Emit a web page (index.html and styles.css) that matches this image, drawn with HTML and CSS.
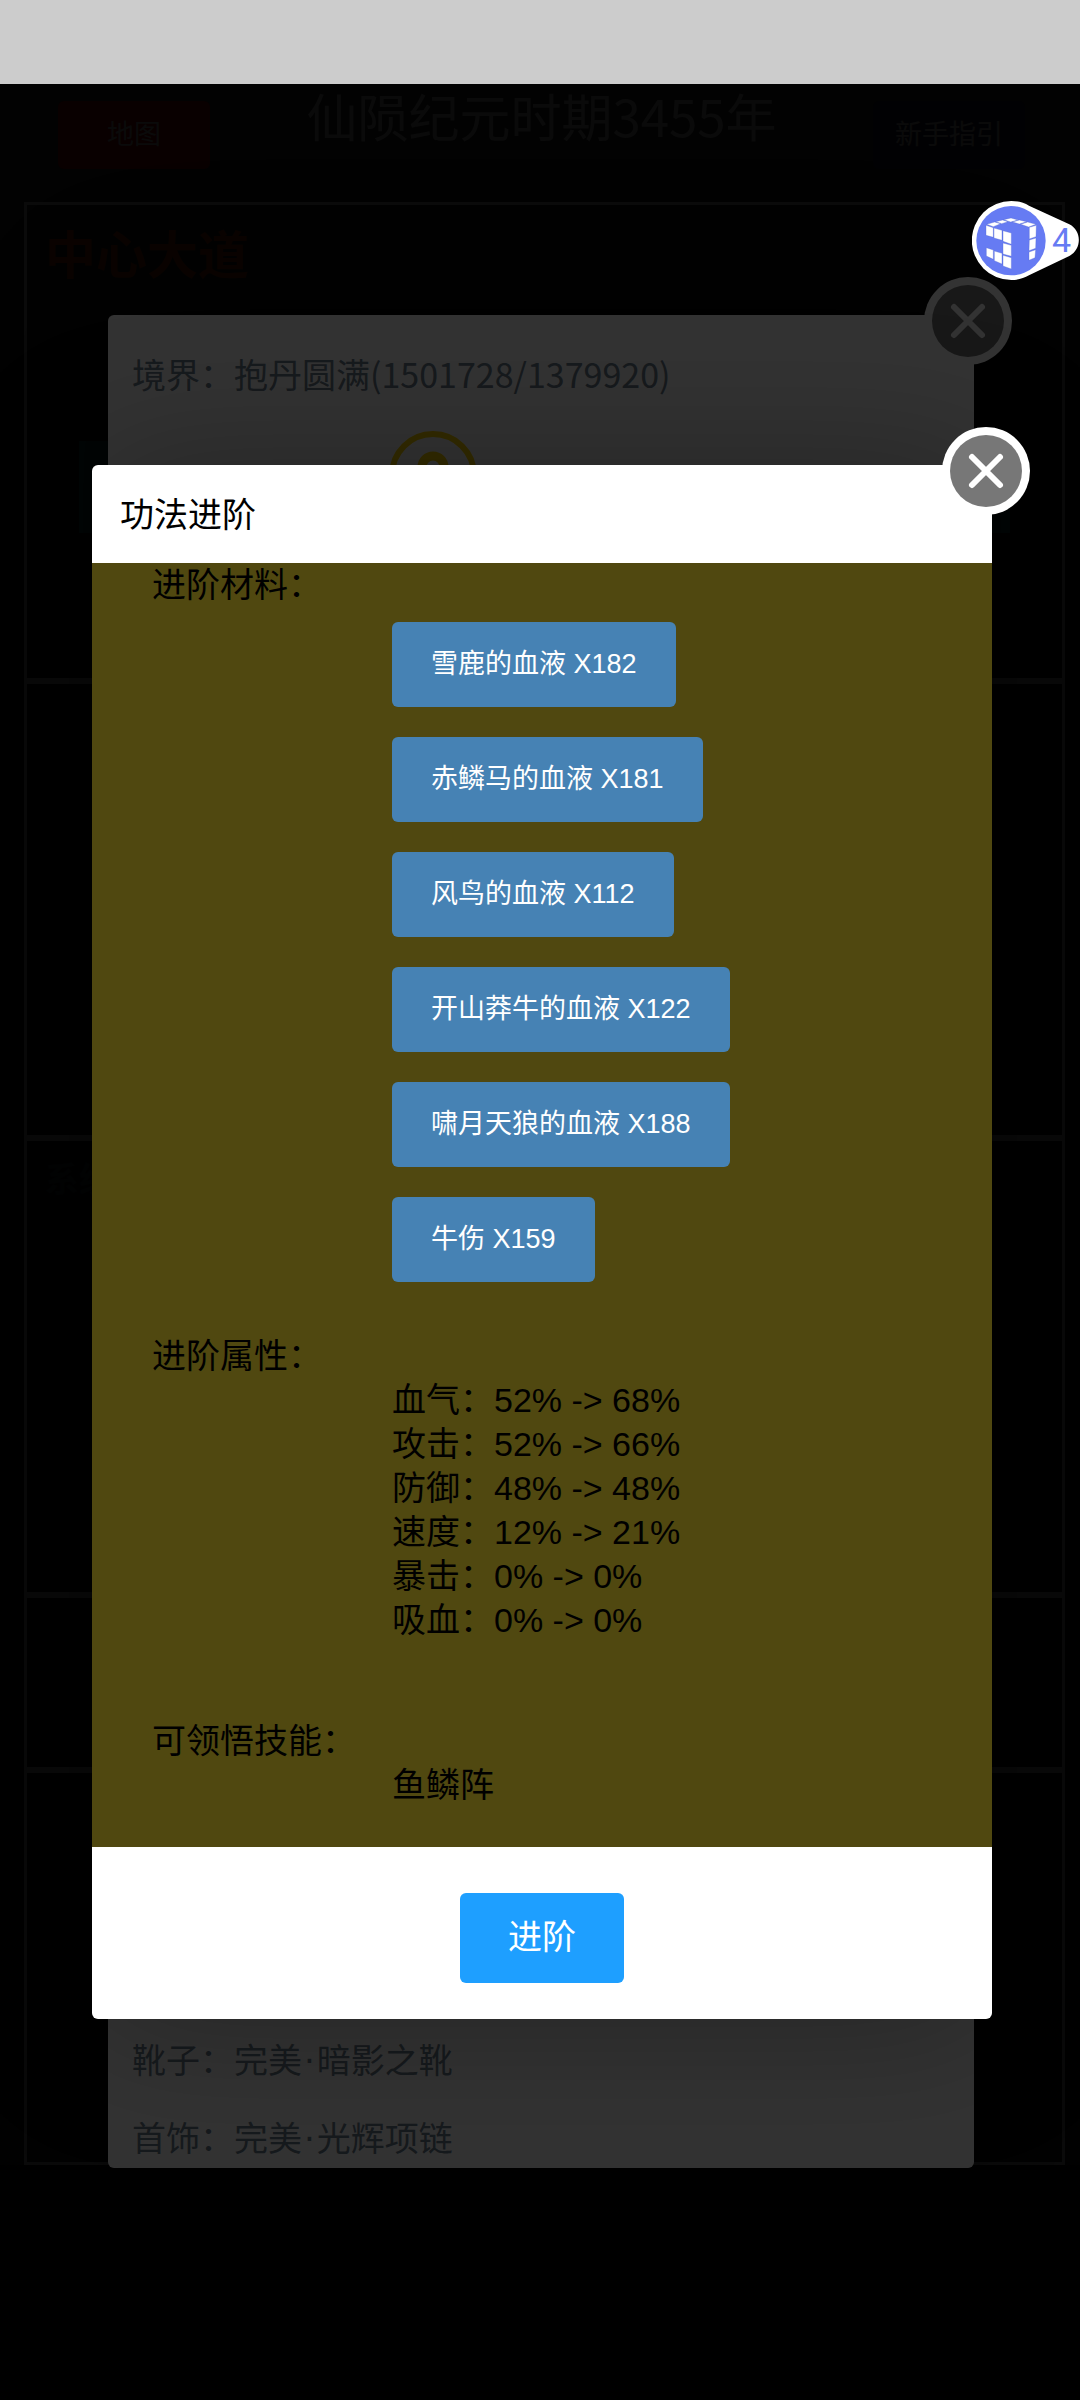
FILE: index.html
```
<!DOCTYPE html>
<html lang="zh-CN">

<head>
    <meta charset="utf-8">
    <meta name="viewport" content="width=device-width, initial-scale=1">
    <title>仙陨纪元</title>
    <link rel="stylesheet" href="styles.css">
</head>

<body>
    <div class="status-bar"></div>

    <div class="screen">
        <div class="page">
            <div class="top-bar">
                <button class="nav-button map">地图</button>
                <h1>仙陨纪元时期3455年</h1>
                <button class="nav-button guide">新手指引</button>
            </div>

            <div class="board">
                <div class="place">
                    <h2>中心大道</h2>
                    <div class="place-block"></div>
                </div>
                <div class="panel"></div>
                <div class="panel">
                    <h3>系统</h3>
                </div>
                <div class="panel short"></div>
                <div class="panel last"></div>
            </div>
        </div>

        <div class="shade"></div>

        <!-- role info -->
        <div class="popup role">
            <button class="close" aria-label="关闭">
                <svg viewBox="0 0 90 90">
                    <circle cx="45" cy="45" r="44" fill="#fff" />
                    <circle cx="45" cy="45" r="36" fill="#777" />
                    <path d="M31 31L59 59M59 31L31 59" stroke="#fff" stroke-width="6" stroke-linecap="round" />
                </svg>
            </button>
            <div class="role-top">
                <p>境界：抱丹圆满(1501728/1379920)</p>
                <svg class="coin" viewBox="0 0 88 88" fill="none" stroke="gold">
                    <circle cx="44" cy="44" r="41" stroke-width="6" />
                    <circle cx="44" cy="36" r="11" stroke-width="9" />
                </svg>
            </div>
            <div class="role-bottom">
                <p>靴子：完美<span class="dot">·</span>暗影之靴</p>
                <p>首饰：完美<span class="dot">·</span>光辉项链</p>
            </div>
        </div>

        <div class="shade"></div>

        <!-- upgrade -->
        <div class="popup upgrade">
            <button class="close" aria-label="关闭">
                <svg viewBox="0 0 90 90">
                    <circle cx="45" cy="45" r="44" fill="#fff" />
                    <circle cx="45" cy="45" r="36" fill="#777" />
                    <path d="M31 31L59 59M59 31L31 59" stroke="#fff" stroke-width="6" stroke-linecap="round" />
                </svg>
            </button>
            <div class="upgrade-title">功法进阶</div>
            <div class="upgrade-body">
                <p>进阶材料：</p>
                <div class="materials">
                    <button>雪鹿的血液 X182</button>
                    <button>赤鳞马的血液 X181</button>
                    <button>风鸟的血液 X112</button>
                    <button>开山莽牛的血液 X122</button>
                    <button>啸月天狼的血液 X188</button>
                    <button>牛伤 X159</button>
                </div>
                <p>进阶属性：</p>
                <ul class="attributes">
                    <li>血气：52% -&gt; 68%</li>
                    <li>攻击：52% -&gt; 66%</li>
                    <li>防御：48% -&gt; 48%</li>
                    <li>速度：12% -&gt; 21%</li>
                    <li>暴击：0% -&gt; 0%</li>
                    <li>吸血：0% -&gt; 0%</li>
                </ul>
                <p>可领悟技能：</p>
                <ul class="skills">
                    <li>鱼鳞阵</li>
                </ul>
            </div>
            <div class="upgrade-footer">
                <button>进阶</button>
            </div>
        </div>
    </div>

    <!-- floating helper -->
    <div class="float-ball">
        <svg viewBox="36 33 321 237">
            <path d="M154 33C174 33 192 38 207 47L328 103C366 122 366 178 328 198L207 256C192 265 174 270 154 270A118 118 0 0 1 154 33Z" fill="#fff" />
            <circle cx="153" cy="152" r="104" fill="#667bf3" />
            <g fill="#fff" stroke="#5267cf" stroke-width="1">
                <path d="M78 106L100 113V142L78 136ZM102 114L126 121V151L102 144ZM129 122L154 129V163L129 154Z" />
                <path d="M129 159L154 166V199L129 192ZM129 196L154 203V237L129 228Z" />
                <path d="M79 173L100 180V208L79 198ZM103 183L126 190V222L103 212Z" />
                <path d="M208 112L229 106L228 140L208 147ZM208 150L228 144L227 175L207 182ZM207 186L227 179L225 203L207 211Z" />
                <path d="M80 103L104 96L122 101L100 110ZM107 95L128 90L144 95L125 101ZM131 89L153 84L175 90L152 96Z" />
                <path d="M178 90L200 95L178 102L157 96ZM203 96L228 103L206 111L182 103Z" />
            </g>
        </svg>
        <span>4</span>
    </div>
</body>

</html>
```

FILE: styles.css
```
* {
    box-sizing: border-box;
}

body {
    margin: 0;
    min-height: 100vh;
    display: flex;
    flex-direction: column;
    position: relative;
    font-family: "Noto Sans CJK SC", sans-serif;
    font-size: 34px;
    line-height: 44px;
    color: #000;
    background-color: #000;
}

h1, h2, h3, p, ul {
    margin: 0;
    padding: 0;
    font-weight: normal;
    list-style: none;
}

button {
    font-family: inherit;
    border: none;
    border-radius: 6px;
    color: #fff;
    cursor: pointer;
}

.status-bar {
    height: 84px;
    background-color: #ccc;
}

.screen {
    flex: 1;
    position: relative;
}

.page {
    min-height: 100%;
    background-color: #333;
    color: #fff;
}

.top-bar {
    display: flex;
    justify-content: space-between;
    align-items: flex-start;
    padding: 0 55px 0 58px;
    height: 118px;
}

.top-bar h1 {
    font-size: 51px;
    line-height: 62px;
}

.nav-button {
    width: 152px;
    height: 68px;
    margin-top: 17px;
    padding: 0 0 6px;
    font-size: 27px;
}

.map {
    background-color: #e00000;
}

.guide {
    background-color: #302850;
}

.board {
    margin: 0 15px 0 24px;
}

.place,
.panel {
    border: 3px solid #fff;
    padding: 5px 18px;
    height: 457px;
}

.place {
    height: 479px;
    padding-top: 12px;
}

.place h2 {
    font-size: 51px;
    line-height: 70px;
    font-weight: bold;
    color: orangered;
}

.place-block {
    margin: 154px 34px 0;
    height: 92px;
    background-color: darkcyan;
}

.panel h3 {
    font-size: 34px;
    font-weight: bold;
    color: #456;
    padding-top: 10px;
}

.panel.short {
    height: 175px;
}

.panel.last {
    height: 395px;
}

.shade {
    position: absolute;
    inset: 0;
    background-color: rgba(0, 0, 0, 0.8);
}

.popup {
    position: absolute;
    border-radius: 6px;
    background-color: #fff;
    box-shadow: 1px 1px 150px rgba(0, 0, 0, 0.3);
}

.close {
    position: absolute;
    top: -39px;
    right: -39px;
    width: 90px;
    height: 90px;
    padding: 0;
    background: none;
}

.close svg {
    display: block;
}

.role {
    top: 231px;
    left: 10%;
    right: 106px;
    height: 1853px;
    padding: 37px 24px 9px;
    display: flex;
    flex-direction: column;
    justify-content: space-between;
    color: slategray;
}

.coin {
    display: block;
    width: 88px;
    margin: 35px 0 0 257px;
}

.role-bottom {
    display: flex;
    flex-direction: column;
    gap: 34px;
}

.dot {
    font-family: "DejaVu Sans", sans-serif;
    line-height: 1;
    padding: 0 2px;
}

.upgrade {
    top: 381px;
    left: 92px;
    right: 88px;
}

.upgrade-title {
    padding: 26px 28px 28px;
}

.upgrade-body {
    padding: 0 60px 40px;
    font-family: "Liberation Sans", "Noto Sans CJK SC", sans-serif;
    background-color: #504810;
}

.materials {
    display: flex;
    flex-direction: column;
    align-items: flex-start;
    gap: 30px;
    padding: 15px 0 52px 240px;
}

.materials button {
    height: 85px;
    padding: 0 39px 6px;
    font-size: 27px;
    background-color: steelblue;
}

.attributes {
    padding: 0 0 77px 240px;
}

.skills {
    padding-left: 240px;
}

.upgrade-footer {
    display: flex;
    justify-content: center;
    padding: 46px 0 36px;
}

.upgrade-footer button {
    width: 164px;
    height: 90px;
    padding: 0 0 8px;
    font-size: 34px;
    background-color: #1e9fff;
}

.float-ball {
    position: absolute;
    top: 201px;
    right: 1px;
    width: 107px;
    display: flex;
}

.float-ball svg {
    width: 100%;
}

.float-ball span {
    position: absolute;
    right: 8px;
    top: 17px;
    font-family: Roboto, sans-serif;
    font-size: 34px;
    color: #667bf3;
}
```
